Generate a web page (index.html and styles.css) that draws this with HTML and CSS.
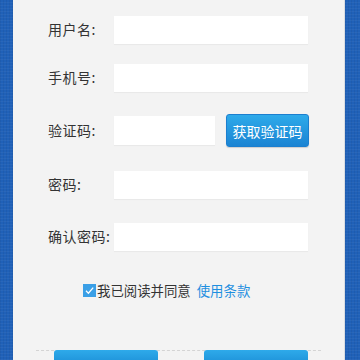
FILE: index.html
```html
<!DOCTYPE html>
<html lang="zh-CN">
<head>
  <meta charset="UTF-8" />
  <meta name="viewport" content="width=device-width, initial-scale=1.0" />
  <title>注册</title>
  <link rel="stylesheet" href="styles.css">
</head>
<body>
  <div class="page">
    <div class="side side-left"></div>

    <div class="panel">
      <div class="form">
        <div class="row">
          <label class="label">用户名:</label>
          <input type="text" class="field" />
        </div>
        <div class="row">
          <label class="label">手机号:</label>
          <input type="text" class="field" />
        </div>
        <div class="row row-code">
          <label class="label">验证码:</label>
          <input type="text" class="field field-code" />
          <button class="code-btn">获取验证码</button>
        </div>
        <div class="row row-pwd">
          <label class="label">密码:</label>
          <input type="password" class="field" />
        </div>
        <div class="row row-pwd">
          <label class="label">确认密码:</label>
          <input type="password" class="field" />
        </div>
      </div>

      <div class="agree">
        <span class="check">
          <svg width="13" height="13" viewBox="0 0 13 13">
            <rect width="13" height="13" fill="#3a9fe6" />
            <path d="M3 6.8 L5.4 9.2 L10.2 3.6" fill="none" stroke="#fff" stroke-width="1.3" />
          </svg>
        </span>
        <span>我已阅读并同意</span>
        <a class="terms" href="#">使用条款</a>
      </div>

      <!-- 底部按钮只露出顶部 -->
      <div class="actions">
        <button class="action-btn" aria-label="注册"></button>
        <button class="action-btn" aria-label="取消"></button>
      </div>
    </div>

    <div class="side side-right"></div>
  </div>
</body>
</html>
```

FILE: styles.css
```css
body {
  margin: 0;
  font-family: "Noto Sans CJK SC", "Noto Sans", sans-serif;
  font-size: 14px;
  color: #333;
  overflow: hidden;
}

.page {
  display: flex;
  width: 360px;
  height: 360px;
  overflow: hidden;
}

/* 两侧蓝色边 */
.side {
  background-color: #2061b8;
  background-image: repeating-linear-gradient(0deg, rgba(255,255,255,0.04) 0 1px, transparent 1px 3px),
                    repeating-linear-gradient(90deg, rgba(0,0,0,0.05) 0 1px, transparent 1px 3px);
}

.side-left {
  width: 13px;
}

.side-right {
  width: 15px;
  border-left: 1px solid #d9dde3;
}

.panel {
  flex-grow: 1;
  background: #f3f3f3;
  display: flex;
  flex-direction: column;
  overflow: hidden;
}

/* 表单区 */
.form {
  padding: 16px 0 0 35px;
  display: flex;
  flex-direction: column;
}

.row {
  display: flex;
  align-items: center;
  height: 28px;
}

.row + .row {
  margin-top: 20px;
}

.row.row-code {
  height: 33px;
  margin-top: 22px;
}

.row.row-pwd {
  margin-top: 24px;
}

.label {
  width: 66px;
  line-height: 28px;
  letter-spacing: 0.5px;
  position: relative;
  top: -1px;
}

.field {
  box-sizing: border-box;
  width: 194px;
  height: 28px;
  border: none;
  background: #fff;
  box-shadow: 0 1px 1px rgba(0, 0, 0, 0.04);
  outline: none;
  padding: 0 6px;
}

.field-code {
  width: 101px;
  height: 29px;
}

.code-btn {
  margin-left: 11px;
  width: 83px;
  height: 33px;
  border: 1px solid #1c7fcf;
  border-radius: 3px;
  background: linear-gradient(to bottom, #2eaaea, #1b84d3);
  color: #fff;
  font-family: inherit;
  font-size: 14px;
  padding: 0;
  box-shadow: 0 1px 1px rgba(0, 0, 0, 0.15);
}

/* 同意条款 */
.agree {
  margin-top: 31px;
  padding-left: 70px;
  display: flex;
  align-items: center;
  height: 16px;
  font-size: 13.4px;
  color: #333;
}

.check {
  display: flex;
  margin-right: 1px;
}

.terms {
  margin-left: 6px;
  color: #1f8fe0;
  text-decoration: none;
}

/* 底部按钮 */
.actions {
  margin: 52px 23px 0 23px;
  border-top: 1px dashed #d4d4d4;
  display: flex;
  gap: 46px;
  padding-left: 18px;
}

.action-btn {
  width: 104px;
  height: 10px;
  margin-top: -1px;
  border: none;
  border-radius: 3px 3px 0 0;
  background: linear-gradient(to bottom, #2eaaea, #2298dd);
  padding: 0;
}
```
